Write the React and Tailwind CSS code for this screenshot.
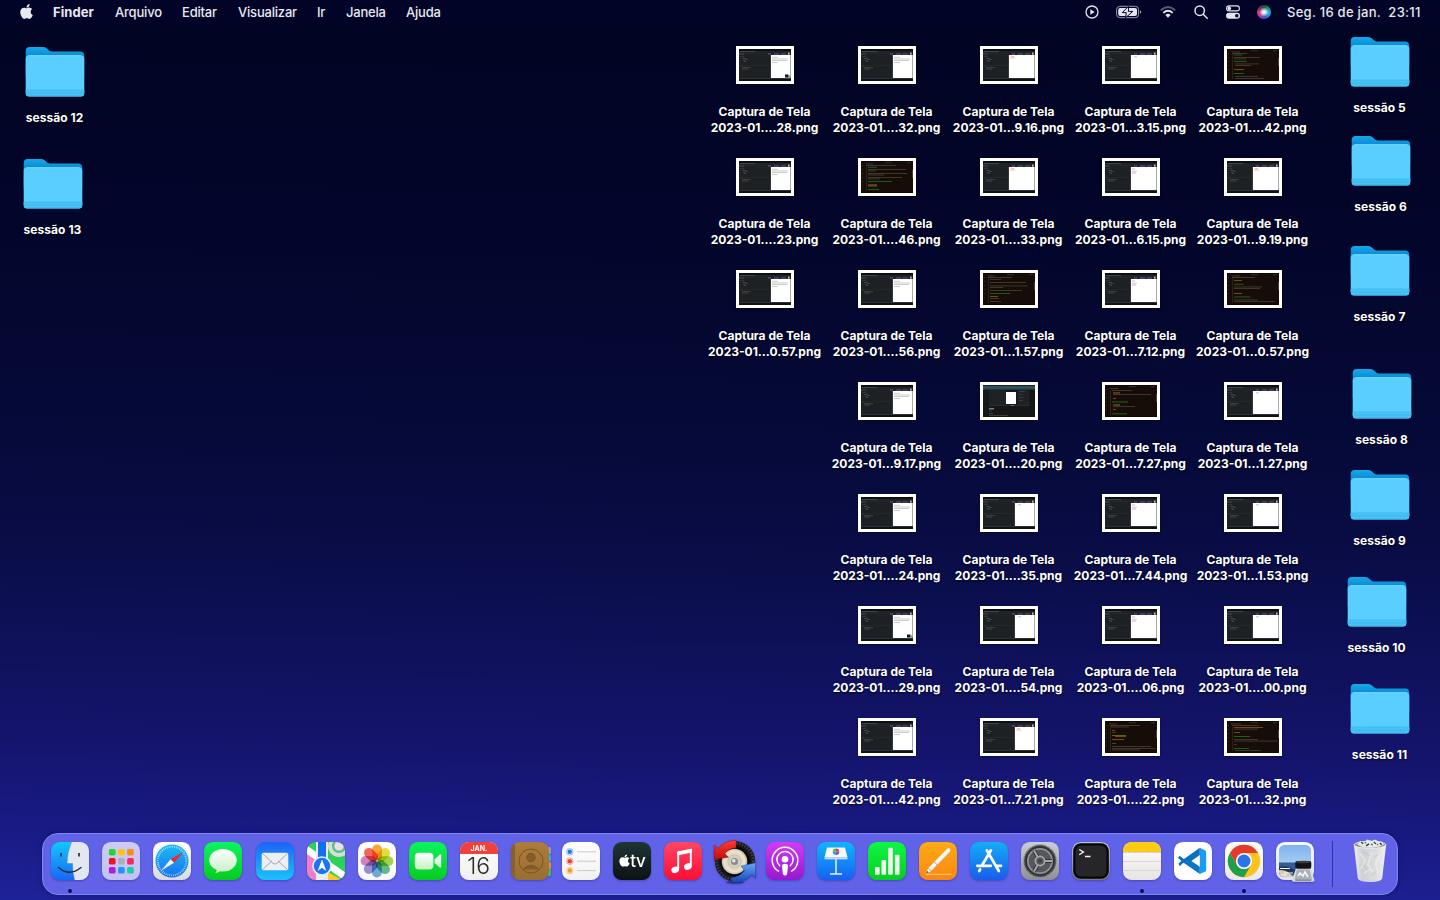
import React from "react";
import { FaApple } from "react-icons/fa";

/* ---------- Desktop data ---------- */

const FILES = [
  ["....28.png", "wide", "badge"], ["....32.png", "wide", "lines"], ["...9.16.png", "half", "red"], ["...3.15.png", "half", "plain"], ["....42.png", "code", 0],
  ["....23.png", "wide", "lines"], ["....46.png", "code", 1], ["....33.png", "half", "red"], ["...6.15.png", "half", "list"], ["...9.19.png", "half", "red"],
  ["...0.57.png", "wide", "lines"], ["....56.png", "wide", "lines"], ["...1.57.png", "code", 2], ["...7.12.png", "half", "list"], ["...0.57.png", "code", 3],
  null, ["...9.17.png", "wide", "lines"], ["....20.png", "modal", ""], ["...7.27.png", "code", 4], ["...1.27.png", "half", "plain"],
  null, ["....24.png", "wide", "lines"], ["....35.png", "wide", "plain"], ["...7.44.png", "half", "list"], ["...1.53.png", "half", "plain"],
  null, ["....29.png", "wide", "badge"], ["....54.png", "wide", "plain"], ["....06.png", "half", "list"], ["....00.png", "half", "plain"],
  null, ["....42.png", "wide", "lines"], ["...7.21.png", "wide", "red"], ["....22.png", "code", 5], ["....32.png", "code", 6],
];

const FOLDERS = [
  ["sessão 12", "left-[5px] top-[46px]"],
  ["sessão 13", "left-[3px] top-[158px]"],
  ["sessão 5", "left-[1330px] top-[36px]"],
  ["sessão 6", "left-[1331px] top-[135px]"],
  ["sessão 7", "left-[1330px] top-[245px]"],
  ["sessão 8", "left-[1332px] top-[368px]"],
  ["sessão 9", "left-[1330px] top-[469px]"],
  ["sessão 10", "left-[1327px] top-[576px]"],
  ["sessão 11", "left-[1330px] top-[683px]"],
];

/* Each code line: [y, x, width, colour] */
const G = "#1c8a1c", W = "#77695c", O = "#a8641c";
const CODE = [
  [[2.5, 5, 8, W], [4, 5, 15, W], [5.5, 7, 8, G], [8, 7, 26, W], [9.5, 7, 12, W], [12, 7, 13, G], [14.5, 8, 24, W], [16, 8, 16, W], [20, 7, 10, O], [24, 7, 10, G], [27, 8, 23, W], [29, 8, 29, W]],
  [[2.5, 5, 7, W], [4, 5, 30, W], [5.8, 7, 9, G], [8, 7, 38, W], [9.5, 7, 8, W], [12, 7, 39, W], [13.5, 7, 16, W], [16, 7, 34, W], [17.5, 7, 12, W], [20, 7, 24, G], [23.5, 7, 9, "#c58a3c"], [24.6, 7, 9, O], [28, 7, 11, G]],
  [[2.5, 5, 7, W], [4, 5, 24, W], [6, 7, 11, W], [9, 7, 36, W], [12.5, 7, 38, W], [14, 7, 13, W], [17, 7, 32, W], [20, 7, 20, G], [23, 7, 8, O], [25, 7, 9, W], [28, 7, 11, W]],
  [[2.5, 5, 8, W], [4, 5, 23, W], [7, 7, 8, O], [10.8, 7, 10, G], [13.5, 7, 28, W], [15, 7, 26, W], [20, 7, 8, O], [23.5, 7, 16, G], [26.5, 7, 24, W], [28, 7, 41, W]],
  [[3, 5, 8, W], [5, 7, 20, W], [7.5, 8, 7, "#c58a3c"], [9, 8, 38, W], [13, 8, 3, O], [16.5, 7, 16, G], [19.5, 8, 7, "#c58a3c"], [21, 8, 22, W], [24, 8, 3, O], [28.4, 7, 15, G]],
  [[2.5, 4, 8, W], [4, 5, 30, W], [5.5, 6, 18, W], [9, 7, 3, O], [11, 7, 4, W], [14, 7, 14, "#928317"], [14.9, 10, 11, "#928317"], [18, 7, 12, O], [22, 7, 4, G], [25, 7, 39, W], [27, 7, 43, W], [28.5, 7, 28, W]],
  [[2.5, 4, 10, W], [4, 5, 26, W], [6, 7, 29, O], [7.6, 7, 24, W], [11, 7, 6, O], [15, 7, 16, G], [18, 7, 24, W], [19.6, 7, 44, W], [23, 7, 3, W], [27, 7, 15, G], [29, 8, 26, W]],
];

function Thumb({ kind, detail }) {
  if (kind === "code") {
    return (
      <svg viewBox="0 0 52 32" className="h-8 w-[52px]">
        <rect width="52" height="32" fill="#170d08" />
        <rect width="52" height="1" fill="#0c0808" />
        <rect y="31" width="52" height="1" fill="#0c0808" />
        <path d="M1.5 4v24" stroke="#4a3524" strokeWidth=".8" strokeDasharray="1 3" />
        <path d="M5.5 5v25" stroke="#3a2a20" strokeWidth=".7" />
        <path d="M24 1.700h7M46 1.700h4" stroke="#4b3a2e" strokeWidth=".7" />
        <rect x="51" y="9" width=".8" height="8" fill="#5b4c40" />
        {CODE[detail].map(([y, x, w, c], i) => (
          <rect key={i} x={x} y={y} width={w} height=".9" fill={c} opacity={c === W ? 0.5 : 0.75} />
        ))}
      </svg>
    );
  }
  if (kind === "modal") {
    return (
      <svg viewBox="0 0 52 32" className="h-8 w-[52px]">
        <rect width="52" height="32" fill="#151618" />
        <rect width="52" height="4.5" fill="#30505b" />
        <rect width="52" height="1" fill="#14231d" />
        <rect x="6" y="5" width="17" height="15" fill="#1c2226" />
        <rect x="23" y="7" width="10" height="12" fill="#fff" />
        <rect x="34.5" y="5" width="12" height="16" fill="#1f2125" />
        <path d="M36 6.5h6M36 9.5h4M36 12.5h5M36 15.5h4" stroke="#3c5a5c" strokeWidth=".5" />
        <path d="M6 20.5h40" stroke="#2b2d34" />
        <path d="M28 20.5h3" stroke="#7657b3" />
        <path d="M6 23.800h5" stroke="#aaa" />
        <path d="M6 26h3M6 28.500h4M6 30.500h19" stroke="#555" strokeWidth=".6" />
      </svg>
    );
  }
  const x = kind === "wide" ? 32 : 26;
  return (
    <svg viewBox="0 0 52 32" className="h-8 w-[52px]">
      <rect width="52" height="32" fill="#1d2124" />
      <rect width="52" height="2" fill="#0d100f" />
      <rect y="2" width="52" height="4" fill="#20232c" />
      <path d="M1 2.600h15M0 5h5" stroke="#5b606d" strokeWidth=".6" />
      <path d="M29 5h3M35 5h5M42 5h5" stroke="#5c5a7c" strokeWidth="1" />
      <rect x="49" y="3.500" width="1.600" height="2.300" fill="#c9a9a9" />
      <rect x={x - 0.7} y="6" width=".7" height="23" fill="#3d4248" />
      <rect x={x} y="6" width={51 - x} height="23" fill="#fff" />
      <rect x="51" y="6" width="1" height="23" fill="#a9abb0" />
      <path d={`M0 16.500h${x - 1}`} stroke="#2d3136" strokeWidth=".5" />
      <path d="M1 7.500h4M1 17h2" stroke="#474d55" strokeWidth=".5" />
      <path d="M3 9.500h4M4 11.500h2M3 18.600h9M3 20h6" stroke="#6d6558" strokeWidth=".5" />
      <path d="M6 10.500h3M5 12.500h2" stroke="#4f6b58" strokeWidth=".5" />
      <rect y="29" width="52" height="1" fill="#2c3039" />
      <rect y="30" width="52" height="2" fill="#0d1216" />
      {(detail === "lines" || detail === "badge") && (
        <path d={`M${x + 1} 8.300h6M${x + 1} 10h16M${x + 1} 11.500h15M${x + 1} 13.500h6`} stroke="#aaa9ac" strokeWidth=".6" />
      )}
      {detail === "badge" && <path d="M46 25.500h3.500v3H46z" fill="#15191c" />}
      {detail === "badge" && <path d="M49.500 27h1.500v2h-5" stroke="#50555a" fill="none" strokeWidth=".7" />}
      {detail === "red" && <path d={`M${x + 2} 7.500h3M${x + 1} 9h5`} stroke="#f19a96" strokeWidth=".7" />}
      {detail === "list" && (
        <g strokeWidth=".7">
          <path d={`M${x + 1} 8h3M${x + 1} 12h4`} stroke="#9c9c9c" />
          <path d={`M${x + 1} 10.300h5`} stroke="#f0a09a" />
        </g>
      )}
      {detail === "plain" && <path d={`M${x + 3} 7.800h3`} stroke="#a5a6c5" strokeWidth=".7" />}
    </svg>
  );
}

function FileIcon({ suffix, kind, detail }) {
  return (
    <div className="flex flex-col items-center">
      <div className="border-[3px] border-white shadow-[0_1px_2px_rgba(0,0,0,0.5)]">
        <Thumb kind={kind} detail={detail} />
      </div>
      <div className="mt-5 mr-px text-center text-[12px] leading-4 font-bold whitespace-nowrap text-white [text-shadow:0_1px_2px_rgba(0,0,0,0.75)]">
        <div>Captura de Tela</div>
        <div>{"2023-01" + suffix}</div>
      </div>
    </div>
  );
}

function Folder({ name, place }) {
  return (
    <div className={`absolute flex w-[100px] flex-col items-center ${place}`}>
      <svg viewBox="0 0 60 52" className="h-[52px] w-[60px]">
        <defs>
          <linearGradient id="folderBack" x1="0" y1="0" x2="0" y2="1">
            <stop offset="0" stopColor="#16a9e6" />
            <stop offset=".3" stopColor="#0a8ad8" />
            <stop offset="1" stopColor="#0b7fd2" />
          </linearGradient>
        </defs>
        <path d="M.7 5q0-4 4-4H18q2 0 3.600 1.300l2.600 2.200q1.300 1 3 1H55q4.200 0 4.200 4V30H.7z" fill="url(#folderBack)" />
        <rect x=".7" y="9.300" width="58.600" height="41.100" rx="3.500" fill="#5acfff" />
        <path d="M3.500 9.700h53" stroke="#80dcff" strokeWidth=".8" />
        <path d="M.7 44h58.600v2.900q0 3.500-3.500 3.500H4.200q-3.500 0-3.500-3.500z" fill="#48c3f5" />
        <path d="M.7 44h58.600M1 47h58" stroke="#35b0e6" strokeWidth=".6" />
        <path d="M4 50.200h52" stroke="#268fc4" strokeWidth=".6" />
      </svg>
      <div className="mt-3 mr-px text-[12px] leading-4 font-bold tracking-[0.05px] whitespace-nowrap text-white [text-shadow:0_1px_2px_rgba(0,0,0,0.75)]">{name}</div>
    </div>
  );
}

/* ---------- Dock icons, all on a 38 x 38 grid ---------- */

function Grad({ id, a, b, m }) {
  return (
    <linearGradient id={id} x1="0" y1="0" x2="0" y2="1">
      <stop offset="0" stopColor={a} />
      {m && <stop offset=".5" stopColor={m} />}
      <stop offset="1" stopColor={b} />
    </linearGradient>
  );
}

function Tile({ id, a, b, children }) {
  return (
    <>
      <defs>
        <Grad id={id} a={a} b={b} />
        <clipPath id={id + "Clip"}><rect width="38" height="38" rx="8.800" /></clipPath>
      </defs>
      <rect width="38" height="38" rx="8.800" fill={`url(#${id})`} />
      {children}
    </>
  );
}

const Finder = () => (
  <Tile id="finder" a="#12c8fb" b="#1767f6">
    <path clipPath="url(#finderClip)" d="M20.500 0Q16 11 16 21.500h5.500Q21.300 30 23.500 38H38V0z" fill="#e3e7f2" />
    <path d="M20.500 0Q16 11 16 21.500h5.500Q21.300 30 23.500 38" fill="none" stroke="#2d6fb8" strokeWidth=".4" />
    <path d="M10 11v3.400M28 11v3.400" stroke="#1b2836" strokeWidth="1.600" />
    <path d="M7.500 25.500Q18.500 35 30 25.500" fill="none" stroke="#1b2836" strokeWidth="1.300" strokeLinecap="round" />
  </Tile>
);

const LP = ["#25d62d", "#fbc312", "#fb8d10", "#ef1520", "#a9b0bb", "#f8285e", "#ad1fd9", "#1d96f8", "#1bcba6"];
const Launchpad = () => (
  <Tile id="launch" a="#cdcbf7" b="#c3c1f2">
    {LP.map((c, i) => (
      <rect key={c} x={6.900 + (i % 3) * 9.100} y={6.900 + Math.floor(i / 3) * 9.100} width="6.700" height="6.500" rx="1.600" fill={c} />
    ))}
  </Tile>
);

const Safari = () => (
  <Tile id="safari" a="#ffffff" b="#dadada">
    <defs><Grad id="safariDial" a="#1cbcf5" b="#1772ee" /></defs>
    <circle cx="19" cy="19" r="16.500" fill="url(#safariDial)" />
    <circle cx="19" cy="19" r="14.300" fill="none" stroke="#d8f0ff" strokeWidth="2" strokeDasharray=".6 1.270" />
    <path d="M30.800 9.700 17.600 17.200l3.400 3.600z" fill="#ef2a2a" />
    <path d="M8 28.800 17.600 17.200l3.400 3.600z" fill="#f2f2f4" />
  </Tile>
);

const Messages = () => (
  <Tile id="msg" a="#0bf561" b="#06cb20">
    <defs><Grad id="msgBubble" a="#ffffff" b="#c6efc4" /></defs>
    <path d="M19 7c7.700 0 13.800 5 13.800 11.300S26.700 29.600 19 29.600q-1.600 0-3-.300-2 1.700-5 1.900 1.700-1.300 1.800-3.300Q5.200 25 5.200 18.300C5.200 12 11.300 7 19 7z" fill="url(#msgBubble)" />
  </Tile>
);

const Mail = () => (
  <Tile id="mail" a="#1e62f7" b="#1bc3fc">
    <rect x="5.700" y="10.800" width="26.600" height="17.400" rx="1.800" fill="#eceff4" />
    <path d="M6.500 11.500 17 21.300q2 1.800 4 0l10.500-9.800M6.500 27.600l9.300-8.500M31.500 27.600l-9.300-8.500" fill="none" stroke="#9ba1ab" strokeWidth=".9" />
  </Tile>
);

const Maps = () => (
  <Tile id="maps" a="#2ed158" b="#2ed158">
    <g clipPath="url(#mapsClip)">
      <path d="M0 9l14 10v19H0z" fill="#f17dc8" />
      <path d="M-1 7 40 36" stroke="#fff" strokeWidth="7" />
      <path d="M21 30 35 38H21z" fill="#fbcc1c" />
      <path d="M9 0h12v38H9z" fill="#ececf0" />
      <path d="M11 0h8v24h-8z" fill="#126fee" />
      <circle cx="32" cy="4" r="9" fill="#46cc62" stroke="#d7dade" strokeWidth="4" />
      <circle cx="32" cy="4" r="5" fill="#e3e5e8" stroke="#a3a9ae" strokeWidth="1" />
    </g>
    <circle cx="15" cy="24" r="9" fill="#1c74f4" stroke="#e6edf8" strokeWidth="1.600" />
    <path d="m15 17.500 4.300 11.500-4.300-3.200-4.300 3.200z" fill="#fff" />
  </Tile>
);

const PET = ["#fb9a18", "#e3dc20", "#9bcf34", "#52b47c", "#5ba4da", "#8c86cd", "#cc74b4", "#f4523e"];
const Photos = () => (
  <Tile id="photos" a="#ffffff" b="#f7f7f7">
    {PET.map((c, i) => (
      <rect key={c} x="14.200" y="2.600" width="9.800" height="15.800" rx="4.900" fill={c} opacity=".88" className="mix-blend-multiply" transform={`rotate(${i * 45} 19 19)`} />
    ))}
  </Tile>
);

const FaceTime = () => (
  <Tile id="face" a="#0bf561" b="#06cb20">
    <defs><Grad id="faceCam" a="#ffffff" b="#c6efc4" /></defs>
    <rect x="5.800" y="10.800" width="18.600" height="16.600" rx="4" fill="url(#faceCam)" />
    <path d="m25.500 17.500 5-4.800q1.700-1.200 1.700.6v11.400q0 1.800-1.700.6l-5-4.300z" fill="url(#faceCam)" />
  </Tile>
);

const Calendar = () => (
  <Tile id="cal" a="#ffffff" b="#efefef">
    <path clipPath="url(#calClip)" d="M0 0h38v12H0z" fill="#f2403b" />
    <text x="19" y="9.300" textAnchor="middle" fontFamily="Inter, sans-serif" fontWeight="700" fontSize="7" fill="#fff">JAN.</text>
    <text x="18.700" y="32" textAnchor="middle" fontFamily="Inter, sans-serif" fontWeight="300" fontSize="23" letterSpacing="0" fill="#2c2c2c">16</text>
  </Tile>
);

const Contacts = () => (
  <>
    <rect x="34" y="5" width="6" height="7" rx="1.500" fill="#9aa1a8" />
    <rect x="34" y="12.500" width="6" height="7" rx="1.500" fill="#33a9e0" />
    <rect x="34" y="20" width="6" height="7" rx="1.500" fill="#f08a2c" />
    <rect x="34" y="27" width="6" height="7" rx="1.500" fill="#35bf6b" />
    <Tile id="contacts" a="#ab7c3b" b="#9a6d31">
      <path clipPath="url(#contactsClip)" d="M0 0h4v38H0z" fill="#86602d" />
      <g fill="none" stroke="#7a5524" strokeWidth="1">
        <circle cx="20" cy="19" r="12" />
        <path d="M12 27.500q8-8.500 16 0" fill="#845d29" />
        <circle cx="20" cy="15.500" r="4.200" fill="#845d29" />
      </g>
    </Tile>
  </>
);

const Reminders = () => (
  <Tile id="rem" a="#ffffff" b="#f1f1f1">
    {["#1e7af2", "#f03a34", "#f79a20"].map((c, i) => (
      <g key={c}>
        <circle cx="7.800" cy={9.800 + i * 9.400} r="3.300" fill="none" stroke={c} strokeWidth=".8" opacity=".6" />
        <circle cx="7.800" cy={9.800 + i * 9.400} r="2.300" fill={c} />
        <path d={`M15 ${9.800 + i * 9.400}h19`} stroke="#c9c9cb" strokeWidth="1" />
      </g>
    ))}
  </Tile>
);

const TV = () => (
  <Tile id="tv" a="#1f3534" b="#0c1213">
    <FaApple x="4.500" y="11.500" size="14" color="#fff" />
    <text x="17.200" y="24.500" fontFamily="Inter, sans-serif" fontWeight="500" fontSize="17" letterSpacing="-.2" fill="#fff">tv</text>
  </Tile>
);

const Music = () => (
  <Tile id="music" a="#fc4763" b="#fb0f35">
    <path d="M14.200 26.800V10.400L26.800 7.800v15.600" fill="none" stroke="#fff" strokeWidth="1.900" />
    <path d="M13.300 9.800 27.700 6.700v3.800L13.300 13.600z" fill="#fff" />
    <ellipse cx="11.200" cy="27.800" rx="3.900" ry="3.200" fill="#fff" transform="rotate(-18 11.200 27.800)" />
    <ellipse cx="23.900" cy="24.500" rx="3.900" ry="3.200" fill="#fff" transform="rotate(-18 23.900 24.500)" />
  </Tile>
);

const Wheel = () => (
  <>
    <defs>
      <radialGradient id="hub"><stop offset="0" stopColor="#f8f8f6" /><stop offset=".35" stopColor="#d2ccb9" /><stop offset=".8" stopColor="#ebe5cf" /><stop offset="1" stopColor="#b9b3a0" /></radialGradient>
      <Grad id="wheelRed" a="#ff3b32" b="#c40d10" />
      <Grad id="wheelBlue" a="#6aa6f4" b="#1645bc" />
    </defs>
    <ellipse cx="20" cy="40.400" rx="9" ry="1.200" fill="#24205f" opacity=".7" />
    <circle cx="20" cy="19.300" r="20.200" fill="#17171a" />
    <circle cx="20" cy="19.300" r="18.300" fill="none" stroke="#3e3e42" strokeWidth="3" strokeDasharray="1.500 1.400" />
    <circle cx="20" cy="19.300" r="14.600" fill="#070708" />
    <circle cx="19.500" cy="19.500" r="12.800" fill="url(#hub)" />
    <circle cx="19.500" cy="19.500" r="6.500" fill="none" stroke="#c9c2ae" />
    <circle cx="19.500" cy="19.500" r="3.500" fill="#858a8d" />
    <circle cx="18.800" cy="18.800" r="1.800" fill="#e4e8ea" />
    <path d="M-.8 3 3.500 6.500Q9-1.500 21-1.800V5.800Q14 6 9.800 11.500L13.500 15.200-.8 17.500z" fill="url(#wheelRed)" stroke="#8d0a0c" strokeWidth=".4" />
    <path d="M40.600 20.800V36L36.500 32.500Q30 41.500 17 40.300L16 35.800Q24 35.500 29.500 28.500L26 24z" fill="url(#wheelBlue)" stroke="#153a8c" strokeWidth=".4" />
  </>
);

const Podcasts = () => (
  <Tile id="pod" a="#d43bf5" b="#9619cf">
    <g fill="none" stroke="#fff" strokeWidth="1.500" strokeLinecap="round">
      <path d="M12.500 29.200A12.800 12.800 0 1 1 25.500 29.200" />
      <path d="M13.800 23.800A8.100 8.100 0 1 1 24.200 23.800" />
    </g>
    <circle cx="19" cy="17.200" r="3.300" fill="#fff" />
    <path d="M16 24.200q0-2.400 3-2.400t3 2.400l-.8 7.400q-.3 2.100-2.200 2.100t-2.200-2.100z" fill="#fff" />
  </Tile>
);

const Keynote = () => (
  <Tile id="key" a="#0fb6fb" b="#1660f3">
    <path d="M18.200 17h1.600v15h-1.600z" fill="#dfe9f6" />
    <path d="M13 31.200h12v1.500H13z" fill="#eef3fa" />
    <path d="M10 5.500h18l2.500 10h-23z" fill="#f6f8fb" />
    <path d="M7.500 15.500h23v1.800h-23z" fill="#cfdbee" />
    <path d="M19 9.700V6.400a3.300 3.300 0 0 1 3.300 3.300z" fill="#e6413e" />
    <path d="M19 9.700h3.300A3.300 3.300 0 0 1 19 13z" fill="#8a4fd1" />
    <path d="M19 9.700V13a3.300 3.300 0 0 1-3.300-3.300z" fill="#28a9ee" />
    <path d="M19 9.700h-3.300A3.300 3.300 0 0 1 19 6.400z" fill="#57bf42" />
  </Tile>
);

const Numbers = () => (
  <Tile id="num" a="#10f646" b="#06ce1f">
    {[[7, 25], [13.500, 18], [20.200, 5.700], [26.900, 12.700]].map(([x, y]) => (
      <rect key={x} x={x} y={y} width="4.600" height={32.700 - y} rx=".8" fill="#effaf0" />
    ))}
  </Tile>
);

const Pages = () => (
  <Tile id="pages" a="#fdab14" b="#fb8711">
    <path d="M7 32.300h25.500" stroke="#ffd49a" strokeWidth=".9" />
    <path d="m6.300 32.300 3-6.300L27.700 7.200q2-1.500 3.200-.3t-.2 3L12.300 29z" fill="#f8f8f8" />
    <path d="m9.300 26 3 3M15.300 20l3 3" stroke="#8f8a84" strokeWidth=".8" fill="none" />
    <path d="M12 28.800 30.500 10" stroke="#c5c0ba" strokeWidth=".8" fill="none" />
    <path d="m6.300 32.300 2-3.500 1.400 1.400z" fill="#6b6259" />
  </Tile>
);

const AppStore = () => (
  <Tile id="store" a="#13adf9" b="#195ceb">
    <g stroke="#fff" strokeWidth="2.700" strokeLinecap="round" fill="none">
      <path d="M21 8.300 12.300 22.800M16.800 8.300 28.800 29" />
      <path d="M7.300 23.800h13.500M27 23.800h4M10.200 27.300l-1 1.700" />
    </g>
  </Tile>
);

const Settings = () => (
  <Tile id="set" a="#c9ced6" b="#8e8f92">
    <circle cx="19" cy="19" r="16" fill="#3b3c3f" />
    <circle cx="19" cy="19" r="16" fill="none" stroke="#75777a" strokeWidth="1.600" strokeDasharray=".9 .9" />
    <circle cx="19" cy="19" r="12.300" fill="#55575a" stroke="#8d8f92" strokeWidth="2.200" />
    <circle cx="19" cy="19" r="13.700" fill="none" stroke="#1f2022" strokeWidth=".8" />
    <g stroke="#292a2c" strokeWidth="3.600"><path d="M19 19 13 8.500M19 19h12M19 19 13 29.500" /></g>
    <g stroke="#a5a7aa" strokeWidth="2"><path d="M19 19 13 8.500M19 19h12M19 19 13 29.500" /></g>
    <circle cx="19" cy="19" r="4.600" fill="#55575a" stroke="#a5a7aa" strokeWidth="1.700" />
    <circle cx="19" cy="19" r="1.700" fill="#3a3c3e" />
  </Tile>
);

const Terminal = () => (
  <Tile id="term" a="#b4c4d8" b="#77797c">
    <rect x="1.200" y="1.200" width="35.600" height="35.600" rx="7.800" fill="#050506" />
    <rect x="3.500" y="3.500" width="31" height="31" rx="5.500" fill="#262628" />
    <path d="m7.200 7.500 4.300 2.600-4.300 2.600M13 14.500h5.500" fill="none" stroke="#f2f2f2" strokeWidth="1.300" />
  </Tile>
);

const Notes = () => (
  <Tile id="notes" a="#ffffff" b="#e7e5e2">
    <path clipPath="url(#notesClip)" d="M0 0h38v10H0z" fill="#fccb12" />
    <path d="M0 10.400h38" stroke="#b8a678" strokeWidth=".8" strokeDasharray="1 .7" />
    <path d="M0 19.500h38M0 28.500h38" stroke="#cfccca" strokeWidth=".7" />
  </Tile>
);

const VSCode = () => (
  <Tile id="vs" a="#ffffff" b="#ffffff">
    <path d="M26 5.800 8.500 21.600 6.200 23.700q-.5.300-1-.1L4.800 22.300q-.5-.6 0-1.100L8.500 18 26 5.800z" fill="#0a6fbd" />
    <path d="M26 32 8.800 16.200 6.200 14.200q-.5-.3-1 .1l-.8 1q-.4.500.1 1L8.500 20 26 32z" fill="#0a6fbd" />
    <path d="M25.800 5.800V13L14.500 21l-5-2z" fill="#0a6fbd" />
    <path d="M25.800 32v-7.300L14.500 17l-5 2z" fill="#0877c8" />
    <path d="m25.800 5.800 5.500 2.600q.9.500.9 1.500v18q0 1-.9 1.500L25.800 32z" fill="#1b9cf0" />
  </Tile>
);

const Chrome = () => (
  <Tile id="chrome" a="#ffffff" b="#e9e9ec">
    <circle cx="19" cy="19" r="16.200" fill="#fcc31e" />
    <path d="M4.970 10.900A16.200 16.200 0 0 1 33.030 10.900H19L11.990 23.050z" fill="#e6392d" />
    <path d="M4.970 10.900A16.200 16.200 0 0 0 19 35.200L26.010 23.050A8.100 8.100 0 0 1 11.990 23.050z" fill="#1e9f4d" />
    <circle cx="19" cy="19" r="8.100" fill="#fff" />
    <circle cx="19" cy="19" r="6.500" fill="#2a74ea" />
  </Tile>
);

const Preview = () => (
  <Tile id="prev" a="#f8f8fb" b="#dfe2ea">
    <defs><Grad id="prevSky" a="#7eb2ee" b="#c6e0f8" /></defs>
    <rect x="3" y="3" width="32" height="32" rx="5.500" fill="url(#prevSky)" />
    <path d="M3 20.500h32V30q0 5-5.500 5h-21Q3 35 3 30z" fill="#335b94" />
    <path d="M3 25q6-2 12 1t12 1v5H3z" fill="#223a60" />
    <path d="M3 28q7 0 10 3t7 4H8.500Q3 35 3 30z" fill="#d9cdb8" />
    <path d="M4 26.500h10M8 31h9M5 33h5" stroke="#f4f6fa" strokeWidth="1.200" />
    <path d="M20 26h14.500l4 12q.3 1.700-1.800 1.700H17.800q-2.100 0-1.800-1.700z" fill="#d8dbe0" />
    <path d="M21 27.500 18.500 38H36l-2.500-10.500z" fill="#aab0b8" />
    <path d="M19.500 38.200h15.800" stroke="#6c7078" strokeWidth="1" />
    <path d="m22 34 2-3 3 3 2-4 3 5" fill="none" stroke="#f4f5f8" strokeWidth="1.600" />
    <rect x="19.300" y="19" width="16" height="7.800" rx="2" fill="#141416" />
    <ellipse cx="27.300" cy="20" rx="7.300" ry="1.300" fill="#3b3b40" />
  </Tile>
);

const APPS = [
  ["Finder", Finder, true], ["Launchpad", Launchpad], ["Safari", Safari], ["Mensagens", Messages], ["Mail", Mail],
  ["Mapas", Maps], ["Fotos", Photos], ["FaceTime", FaceTime], ["Calendário", Calendar], ["Contatos", Contacts],
  ["Lembretes", Reminders], ["TV", TV], ["Música", Music], ["Conversor", Wheel], ["Podcasts", Podcasts],
  ["Keynote", Keynote], ["Numbers", Numbers], ["Pages", Pages], ["App Store", AppStore], ["Ajustes", Settings],
  ["Terminal", Terminal], ["Notas", Notes, true], ["Code", VSCode], ["Chrome", Chrome, true], ["Pré-Visualização", Preview],
];

function Trash() {
  return (
    <svg viewBox="0 0 36 46" className="mt-[4px] h-[45px] w-9 shrink-0">
      <defs>
        <linearGradient id="bin" x1="0" y1="0" x2="1" y2="0">
          <stop offset="0" stopColor="#f0f1f3" /><stop offset=".25" stopColor="#cfd0d2" /><stop offset=".7" stopColor="#dcdddf" /><stop offset="1" stopColor="#f2f2f4" />
        </linearGradient>
      </defs>
      <path d="M1.500 7 5.500 41q.6 4 12.500 4t12.500-4l4-34z" fill="url(#bin)" />
      <ellipse cx="18" cy="7" rx="16.300" ry="3.600" fill="#8b8f90" stroke="#eef0f2" />
      <path d="m5 7 3-4 4 1 3-2.500 5 1.500 3-1.500 4 2 3 0 2 3.500-5 2-7 1-8 0z" fill="#e7e9ea" />
      <path d="m9 4 2 2M14 8l3-2M22 4l2 2M28 5l2 2" stroke="#353b3a" strokeWidth="1.400" />
      <path d="m12.500 4 1.500 1.500M19 6l2 1.500" stroke="#3f8e78" strokeWidth="1.300" />
      <path d="m25 6 1.500 1.500" stroke="#b27934" strokeWidth="1.300" />
      <path d="m8 16 5 7-4 8M20 15l-4 12 5 8M28 17l-4 9 2 10M12 36l6-4" stroke="#f6f6f7" strokeWidth="2" fill="none" opacity=".45" />
      <path d="m11 14 7 4M22 20l4-3M11 28l5 5M20 38l5-4" stroke="#b2b4b7" strokeWidth="1.200" fill="none" opacity=".35" />
    </svg>
  );
}

function Dock() {
  return (
    <footer className="mx-auto mb-[5px] flex h-[62px] w-[1356px] shrink-0 rounded-[16px] border border-[#8184f0] bg-[#6063e8] pl-[1.8px] shadow-[0_0_6px_rgba(0,0,40,0.25)]">
      {APPS.map(([name, Icon, running]) => (
        <div key={name} className="flex w-[51.05px] shrink-0 flex-col items-center pt-2">
          <svg viewBox="0 0 38 38" className="h-[38px] w-[38px] overflow-visible drop-shadow-[0_1px_1px_rgba(20,20,80,0.35)]">
            <Icon />
          </svg>
          {running && <span className="mt-[9px] h-1 w-1 rounded-full bg-[#0a0a4c]" />}
        </div>
      ))}
      <span className="mt-[7px] ml-[11px] h-[46px] w-px bg-[#3133a8]" />
      <div className="ml-[19px]"><Trash /></div>
    </footer>
  );
}

/* ---------- Menu bar ---------- */

function StatusIcons() {
  return (
    <div className="flex items-center text-[#e4e4ee]">
      <svg viewBox="0 0 14 14" className="h-[14px] w-[14px]">
        <circle cx="7" cy="7" r="6" fill="none" stroke="currentColor" strokeWidth="1.300" />
        <path d="m5.300 4.200 4.400 2.800-4.400 2.800z" fill="currentColor" />
      </svg>
      <svg viewBox="0 0 26 14" className="ml-[17px] h-[14px] w-[26px]">
        <rect x=".6" y="1.300" width="22" height="11.400" rx="3.300" fill="none" stroke="#9a9aae" strokeWidth="1" />
        <rect x="2.200" y="2.900" width="18.800" height="8.200" rx="2" fill="currentColor" />
        <path d="M24 5.300q1.300.5 1.300 1.700T24 8.700z" fill="#9a9aae" />
        <path d="M12.500 1.200 6.300 7.600h4L9.500 12.800l7.300-6.400h-4.400z" fill="currentColor" stroke="#030527" strokeWidth="1" />
      </svg>
      <svg viewBox="0 0 16 12" className="ml-[18px] h-3 w-4" fill="none" stroke="currentColor" strokeWidth="1.900">
        <path d="M.8 4.300Q8-2.300 15.200 4.300" opacity=".4" />
        <path d="M3.300 6.900Q8 2.700 12.700 6.900" />
        <path d="M5.300 8.900Q8 6.800 10.700 8.900L8 11.700z" fill="currentColor" stroke="none" />
      </svg>
      <svg viewBox="0 0 14 14" className="ml-[18px] h-[14px] w-[14px]" fill="none" stroke="currentColor" strokeWidth="1.500" strokeLinecap="round">
        <circle cx="5.700" cy="5.700" r="4.700" />
        <path d="m9.200 9.200 4 4" />
      </svg>
      <svg viewBox="0 0 14 14" className="ml-[18px] h-[14px] w-[14px]">
        <rect x=".6" y=".9" width="12.800" height="5" rx="2.500" fill="none" stroke="currentColor" strokeWidth="1.100" />
        <circle cx="3.300" cy="3.400" r="1.800" fill="currentColor" />
        <rect x="0" y="7.700" width="14" height="6" rx="3" fill="currentColor" />
        <circle cx="10.800" cy="10.700" r="1.800" fill="#05072c" />
      </svg>
      <span className="ml-[17px] h-[14px] w-[14px] rounded-full bg-[radial-gradient(circle,#ffffff_0%,#ffffffcc_18%,#ffffff00_48%),conic-gradient(#14534c,#1e9c90_60deg,#2aa8e8_110deg,#3c52c8_170deg,#9c3fc0_210deg,#e83a78_265deg,#7d2a5c_310deg,#14534c)]" />
    </div>
  );
}

const MENUS = [
  ["Arquivo", "w-[67px]"], ["Editar", "w-[56px]"], ["Visualizar", "w-[79px]"], ["Ir", "w-[29px]"], ["Janela", "w-[60px]"], ["Ajuda", "w-[40px]"],
];

function MenuBar() {
  return (
    <header className="flex h-6 shrink-0 items-center bg-[#02042b]/50 pr-[19px] pl-5 text-[13px] leading-6 font-medium text-[#e8e8f0]">
      <FaApple size={17} className="-mt-0.5 w-[13px]" />
      <span className="-mt-px ml-5 w-[62px] font-bold tracking-[0.05px]">Finder</span>
      {MENUS.map(([label, width]) => (
        <span key={label} className={`${width} -mt-px tracking-[-0.2px] whitespace-nowrap`}>{label}</span>
      ))}
      <div className="ml-auto flex items-center">
        <StatusIcons />
        <span className="-mt-px ml-4 w-[134px] tracking-[0.27px] whitespace-pre">Seg. 16 de jan.  23:11</span>
      </div>
    </header>
  );
}

export default function App() {
  return (
    <div className="relative flex h-[900px] w-[1440px] flex-col overflow-hidden bg-[linear-gradient(181deg,#020422_0%,#020527_18%,#04072f_35%,#060a3a_50%,#0a0d48_62%,#0f115a_72%,#14146c_82%,#191a84_92%,#1e2298_100%)] font-[Inter,sans-serif]">
      <MenuBar />
      <main className="flex-1">
        <div className="ml-[704px] grid w-[610px] auto-rows-[112px] grid-cols-5 pt-[22px]">
          {FILES.map((f, i) => (f ? <FileIcon key={i} suffix={f[0]} kind={f[1]} detail={f[2]} /> : <div key={i} />))}
        </div>
        {FOLDERS.map(([name, place]) => (
          <Folder key={name} name={name} place={place} />
        ))}
      </main>
      <Dock />
    </div>
  );
}
